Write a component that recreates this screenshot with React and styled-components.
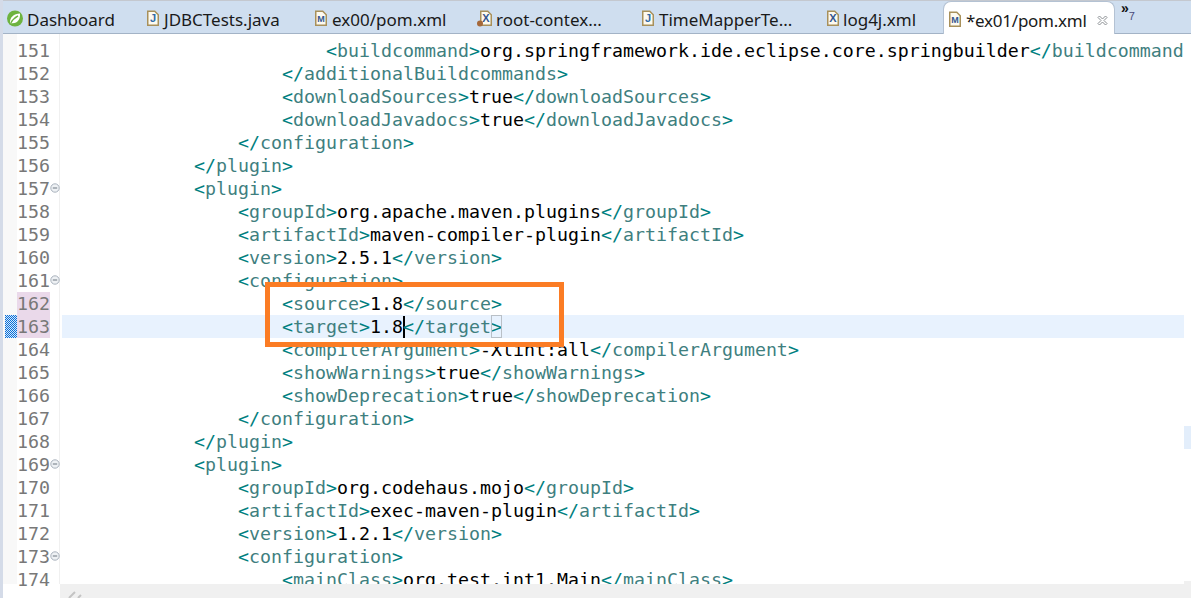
import React from 'react';
import styled, { createGlobalStyle } from 'styled-components';

const GlobalStyle = createGlobalStyle`
  html, body { margin: 0; padding: 0; background: #fff; }
  body { width: 1191px; height: 598px; overflow: hidden; }
`;

const LINES = [
  [151, 24, '<buildcommand>org.springframework.ide.eclipse.core.springbuilder</buildcommand>'],
  [152, 20, '</additionalBuildcommands>'],
  [153, 20, '<downloadSources>true</downloadSources>'],
  [154, 20, '<downloadJavadocs>true</downloadJavadocs>'],
  [155, 16, '</configuration>'],
  [156, 12, '</plugin>'],
  [157, 12, '<plugin>', true],
  [158, 16, '<groupId>org.apache.maven.plugins</groupId>'],
  [159, 16, '<artifactId>maven-compiler-plugin</artifactId>'],
  [160, 16, '<version>2.5.1</version>'],
  [161, 16, '<configuration>', true],
  [162, 20, '<source>1.8</source>'],
  [163, 20, '<target>1.8</target>'],
  [164, 20, '<compilerArgument>-Xlint:all</compilerArgument>'],
  [165, 20, '<showWarnings>true</showWarnings>'],
  [166, 20, '<showDeprecation>true</showDeprecation>'],
  [167, 16, '</configuration>'],
  [168, 12, '</plugin>'],
  [169, 12, '<plugin>', true],
  [170, 16, '<groupId>org.codehaus.mojo</groupId>'],
  [171, 16, '<artifactId>exec-maven-plugin</artifactId>'],
  [172, 16, '<version>1.2.1</version>'],
  [173, 16, '<configuration>', true],
  [174, 20, '<mainClass>org.test.int1.Main</mainClass>'],
];

const TABS = [
  { label: 'Dashboard', icon: 'spring', width: 128, inset: 4 },
  { label: 'JDBCTests.java', icon: 'java', width: 168, inset: 16 },
  { label: 'ex00/pom.xml', icon: 'maven', width: 163, inset: 16 },
  { label: 'root-contex...', icon: 'beans', width: 164, inset: 15 },
  { label: 'TimeMapperTe...', icon: 'java', width: 185, inset: 16 },
  { label: 'log4j.xml', icon: 'xml', width: 132, inset: 16 },
];

const Page = styled.div`
  width: 1191px;
  height: 598px;
  display: flex;
  flex-direction: column;
  overflow: hidden;
  position: relative;
  border-left: 3px solid #d4dbe8;
  box-sizing: border-box;
  background: #fff;
`;

const TabBar = styled.div`
  height: 34px;
  flex: none;
  display: flex;
  box-sizing: border-box;
  background: #cfdeef;
  border-top: 1px solid #c4c8cf;
  border-bottom: 1px solid #a3b3c6;
`;

const Tab = styled.div`
  flex: none;
  width: ${(p) => p.$width}px;
  padding: 2px 0 0 ${(p) => p.$inset}px;
  display: flex;
  align-items: center;
  gap: 4px;
  box-sizing: border-box;
`;

const ActiveTab = styled(Tab)`
  height: 33px;
  background: #fff;
  border: 1px solid #b4c2d3;
  border-bottom: none;
  border-radius: 8px 8px 0 0;
  margin-bottom: -1px;
  position: relative;
  z-index: 1;
`;

const TabLabel = styled.span`
  font-family: "Noto Sans", "Open Sans", sans-serif;
  font-size: 17px;
  color: #1a1a1a;
  white-space: nowrap;
  line-height: 32px;
  padding-top: 3px;
`;

const ActiveLabel = styled(TabLabel)`
  letter-spacing: -0.25px;
`;

const CloseGlyph = styled.svg`
  margin-left: 6px;
  margin-top: 2px;
`;

const Overflow = styled.div`
  margin-left: 6px;
  font-family: "Liberation Sans", sans-serif;
  font-size: 14px;
  font-weight: 700;
  color: #111;
  line-height: 1;
  display: flex;
`;

const OverflowCount = styled.span`
  font-size: 11px;
  font-weight: 400;
  color: #4a4a7a;
  padding-top: 10px;
`;

const Editor = styled.div`
  flex: 1;
  min-height: 0;
  display: flex;
`;

const Gutter = styled.div`
  flex: none;
  width: 57px;
  box-sizing: border-box;
  padding-top: 5px;
  background: linear-gradient(to right, #f8f8f8 14px, #fff 14px);
  border-right: 1px solid #f0f0f0;
`;

const LineNumber = styled.div`
  height: 23px;
  width: 33px;
  box-sizing: border-box;
  margin-left: 14px;
  position: relative;
  font-family: "DejaVu Sans Mono", monospace;
  font-size: 18.27px;
  line-height: 24px;
  color: #787878;
  background: ${(p) => (p.$changed ? '#ead9ea' : 'transparent')};
  text-align: right;
`;

const ChangeMark = styled.svg`
  position: absolute;
  left: -12px;
  top: 0;
`;

const FoldIcon = styled.svg`
  position: absolute;
  left: 33px;
  top: 6px;
  width: 10px;
  height: 10px;
`;

const Code = styled.div`
  flex: 1;
  min-width: 0;
  margin-left: 2px;
  padding-top: 5px;
  overflow: hidden;
`;

const CodeLine = styled.div`
  height: 23px;
  padding-left: ${(p) => p.$indent * 11}px;
  background: ${(p) => (p.$current ? '#e8f2fe' : 'transparent')};
  font-family: "DejaVu Sans Mono", monospace;
  font-size: 18.27px;
  line-height: 24px;
  white-space: pre;
  color: #000;
  position: relative;
`;

const Bracket = styled.span`
  color: #008080;
`;

const TagName = styled.span`
  color: #3f7f7f;
`;

const Caret = styled.span`
  display: inline-block;
  width: 0;
  height: 22px;
  border-left: 2px solid #000;
  margin-right: -2px;
  vertical-align: -5px;
`;

const MatchBox = styled.span`
  display: inline-block;
  height: 23px;
  box-sizing: border-box;
  outline: 1px solid #b9c0c7;
  outline-offset: -1px;
  vertical-align: top;
`;

const Ruler = styled.div`
  flex: none;
  width: 7px;
  position: relative;
  background: #fff;

  &::after {
    content: '';
    position: absolute;
    left: 0;
    right: 0;
    bottom: 0;
    height: 3px;
    background: #f0f0f0;
  }
`;

const RulerMark = styled.div`
  position: absolute;
  left: 0;
  top: 392px;
  width: 7px;
  height: 23px;
  background: #e3eefb;
`;

const ScrollBar = styled.div`
  flex: none;
  height: 14px;
  margin-left: 57px;
  background: #f0f0f0;
  display: flex;
  align-items: flex-end;
  padding-left: 8px;
`;

const Callout = styled.div`
  position: absolute;
  left: 262px;
  top: 282px;
  width: 299px;
  height: 65px;
  box-sizing: border-box;
  border: 5px solid #fb7c24;
  pointer-events: none;
`;

function FileIcon({ kind }) {
  if (kind === 'spring') {
    return (
      <svg width="16" height="17" viewBox="0 0 16 17">
        <circle cx="8" cy="8.5" r="8" fill="#6db33f" />
        <path d="M3 13C2.5 7.500 7 3.500 13 3.500c.4 5.500-2 9.500-7.500 9.800-1 0-1.900-.1-2.500-.3z" fill="#fff" />
        <path d="M3.800 13C5.500 9.500 8 7.500 11 5.800" stroke="#6db33f" strokeWidth="1.400" fill="none" />
      </svg>
    );
  }
  const letter = { java: 'J', maven: 'M', xml: 'X', beans: 'X' }[kind];
  const colour = kind === 'java' ? '#2f6aa8' : '#34568f';
  const fontSize = kind === 'maven' ? 9 : 11;
  const box = { java: '0 0 13 17', maven: '0 0 13 17', xml: '0 0 12 17', beans: '-3 0 15 17' }[kind];
  const width = Number(box.split(' ')[2]);
  return (
    <svg width={width} height="17" viewBox={box}>
      <path d="M.75 1.250h7l3.500 3.500v10.500h-10.500z" fill="#fdfaf0" stroke="#a8905a" strokeWidth="1.500" />
      <text x="6" y="12" textAnchor="middle" fontFamily="Liberation Sans, sans-serif" fontWeight="700" fontSize={fontSize} fill={colour}>
        {letter}
      </text>
      {kind === 'beans' && <circle cx="0" cy="13.500" r="3" fill="#a5683a" />}
    </svg>
  );
}

function CloseIcon() {
  return (
    <CloseGlyph width="11" height="11" viewBox="0 0 11 11">
      <path d="M1 2.500 2.500 1 5.500 4 8.500 1 10 2.500 7 5.500 10 8.500 8.500 10 5.500 7 2.500 10 1 8.500 4 5.500z" fill="#fff" stroke="#8c9094" />
    </CloseGlyph>
  );
}

function Checker() {
  return (
    <ChangeMark width="12" height="23">
      <defs>
        <pattern id="checker" width="2" height="2" patternUnits="userSpaceOnUse">
          <rect width="2" height="2" fill="#d4e8fb" />
          <rect width="1" height="1" fill="#0a6fd8" />
          <rect x="1" y="1" width="1" height="1" fill="#0a6fd8" />
        </pattern>
      </defs>
      <rect width="12" height="23" fill="url(#checker)" shapeRendering="crispEdges" />
    </ChangeMark>
  );
}

function Markup({ source, current }) {
  const parts = source.match(/<[^>]+>|[^<]+/g);
  return parts.map((part, i) => {
    if (part[0] !== '<') {
      return (
        <React.Fragment key={i}>
          {part}
          {current && <Caret />}
        </React.Fragment>
      );
    }
    const open = part[1] === '/' ? '</' : '<';
    const name = part.slice(open.length, -1);
    const close = <Bracket>&gt;</Bracket>;
    return (
      <span key={i}>
        <Bracket>{open}</Bracket>
        <TagName>{name}</TagName>
        {current && i === 2 ? <MatchBox>{close}</MatchBox> : close}
      </span>
    );
  });
}

export default function App() {
  return (
    <Page>
      <GlobalStyle />
      <TabBar>
        {TABS.map((tab) => (
          <Tab key={tab.label} $width={tab.width} $inset={tab.inset}>
            <FileIcon kind={tab.icon} />
            <TabLabel>{tab.label}</TabLabel>
          </Tab>
        ))}
        <ActiveTab $width={172} $inset={5}>
          <FileIcon kind="maven" />
          <ActiveLabel>*ex01/pom.xml</ActiveLabel>
          <CloseIcon />
        </ActiveTab>
        <Overflow>
          »<OverflowCount>7</OverflowCount>
        </Overflow>
      </TabBar>
      <Editor>
        <Gutter>
          {LINES.map(([number, , , foldable]) => (
            <LineNumber key={number} $changed={number === 162 || number === 163}>
              {number}
              {number === 163 && <Checker />}
              {foldable && (
                <FoldIcon viewBox="0 0 10 10">
                  <circle cx="5" cy="5" r="4.200" fill="#eef1f4" stroke="#a9b2bd" />
                  <path d="M2.800 5h4.400" stroke="#6d7680" />
                </FoldIcon>
              )}
            </LineNumber>
          ))}
        </Gutter>
        <Code>
          {LINES.map(([number, indent, source]) => (
            <CodeLine key={number} $indent={indent} $current={number === 163}>
              <Markup source={source} current={number === 163} />
            </CodeLine>
          ))}
        </Code>
        <Ruler>
          <RulerMark />
        </Ruler>
      </Editor>
      <ScrollBar>
        <svg width="22" height="8" viewBox="0 0 22 8">
          <path d="M1 8 7 2M10 8l3-3" stroke="#c4c4c4" strokeWidth="2" fill="none" />
        </svg>
      </ScrollBar>
      <Callout />
    </Page>
  );
}
